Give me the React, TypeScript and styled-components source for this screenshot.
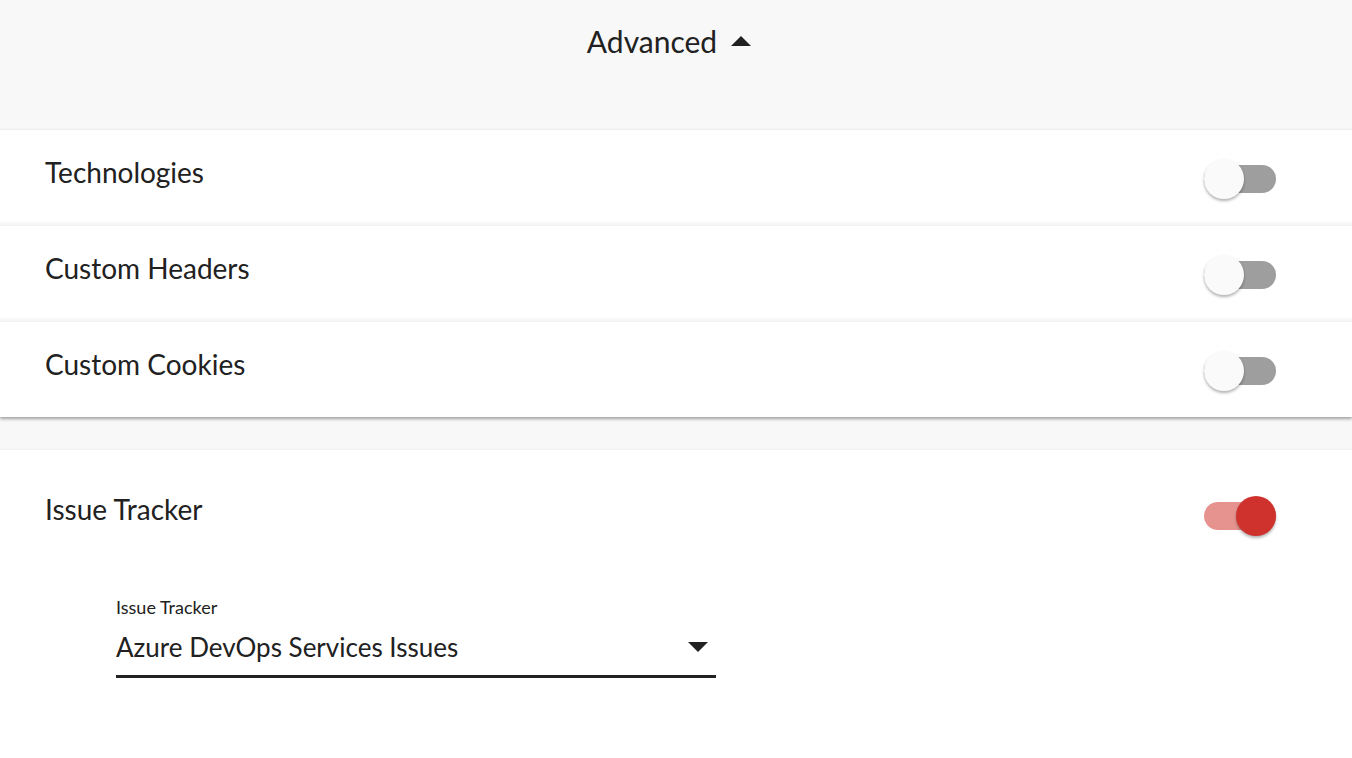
import React, { useState } from 'react';
import styled, { createGlobalStyle } from 'styled-components';

const GlobalStyle = createGlobalStyle`
  html, body {
    margin: 0;
    padding: 0;
    background: #f8f8f8;
    font-family: 'Lato', 'Noto Sans', sans-serif;
    color: #212121;
  }
`;

const Page = styled.div`
  width: 1352px;
  height: 758px;
  overflow: hidden;
  display: flex;
  flex-direction: column;
  background: #f8f8f8;
`;

const Header = styled.div`
  height: 130px;
  display: flex;
  justify-content: center;
  padding: 23px 14px 0 0;
  box-sizing: border-box;
`;

const HeaderButton = styled.button`
  display: flex;
  align-items: center;
  gap: 14px;
  height: 36px;
  border: 0;
  background: transparent;
  font-family: inherit;
  font-size: 30px;
  color: #212121;
  cursor: pointer;
  padding: 0;
`;

const Caret = styled.span<{ $up?: boolean }>`
  width: 0;
  height: 0;
  border-left: 10px solid transparent;
  border-right: 10px solid transparent;
  ${(p) => (p.$up ? 'border-bottom: 10px solid #212121;' : 'border-top: 10px solid #212121;')}
`;

const Group = styled.div`
  display: flex;
  flex-direction: column;
  gap: 4px;
  box-shadow: 0 2px 3px rgba(0, 0, 0, 0.35);
`;

const Row = styled.div`
  height: 92px;
  flex-shrink: 0;
  background: #fff;
  display: flex;
  align-items: center;
  justify-content: space-between;
  padding: 0 76px 0 45px;
  box-shadow: 0 -1px 3px rgba(0, 0, 0, 0.04);

  &:last-child {
    height: 95px;
    padding-bottom: 3px;
    box-sizing: border-box;
  }
`;

const Label = styled.span`
  font-size: 28px;
  margin-top: -8px;
`;

const Spacer = styled.div`
  height: 33px;
  flex-shrink: 0;
`;

const Panel = styled.div`
  flex: 1;
  background: #fff;
  padding: 46px 76px 0 45px;
  box-shadow: 0 -1px 3px rgba(0, 0, 0, 0.04);
`;

const PanelHead = styled.div`
  display: flex;
  align-items: center;
  justify-content: space-between;
`;

const Track = styled.button<{ $on: boolean }>`
  position: relative;
  width: 72px;
  height: 28px;
  border-radius: 14px;
  border: 0;
  padding: 0;
  cursor: pointer;
  background: ${(p) => (p.$on ? '#e6938f' : '#9e9e9e')};
  margin-top: 6px;
`;

const Thumb = styled.span<{ $on: boolean }>`
  position: absolute;
  top: -6px;
  left: ${(p) => (p.$on ? '32px' : '0')};
  width: 40px;
  height: 40px;
  border-radius: 50%;
  background: ${(p) => (p.$on ? '#cf322d' : '#fafafa')};
  box-shadow: 0 2px 3px rgba(0, 0, 0, 0.3);
`;

const Field = styled.div`
  width: 600px;
  margin: 66px 0 0 71px;
  display: flex;
  flex-direction: column;
`;

const FieldLabel = styled.label`
  font-size: 18px;
  line-height: 22px;
`;

const Select = styled.div`
  display: flex;
  align-items: center;
  justify-content: space-between;
  height: 47px;
  margin-top: 5px;
  padding-bottom: 5px;
  border-bottom: 3px solid #212121;
  font-size: 26px;
  padding-right: 8px;
`;

const Toggle = ({ on, onClick }: { on: boolean; onClick: () => void }) => (
  <Track $on={on} onClick={onClick}>
    <Thumb $on={on} />
  </Track>
);

export default function App() {
  const [state, setState] = useState({
    tech: false,
    headers: false,
    cookies: false,
    tracker: true,
  });
  const flip = (k: keyof typeof state) => () => setState({ ...state, [k]: !state[k] });

  return (
    <Page>
      <GlobalStyle />
      <Header>
        <HeaderButton>
          Advanced <Caret $up />
        </HeaderButton>
      </Header>
      <Group>
        <Row>
          <Label>Technologies</Label>
          <Toggle on={state.tech} onClick={flip('tech')} />
        </Row>
        <Row>
          <Label>Custom Headers</Label>
          <Toggle on={state.headers} onClick={flip('headers')} />
        </Row>
        <Row>
          <Label>Custom Cookies</Label>
          <Toggle on={state.cookies} onClick={flip('cookies')} />
        </Row>
      </Group>
      <Spacer />
      <Panel>
        <PanelHead>
          <Label>Issue Tracker</Label>
          <Toggle on={state.tracker} onClick={flip('tracker')} />
        </PanelHead>
        {state.tracker && (
          <Field>
            <FieldLabel>Issue Tracker</FieldLabel>
            <Select>
              Azure DevOps Services Issues
              <Caret />
            </Select>
          </Field>
        )}
      </Panel>
    </Page>
  );
}
